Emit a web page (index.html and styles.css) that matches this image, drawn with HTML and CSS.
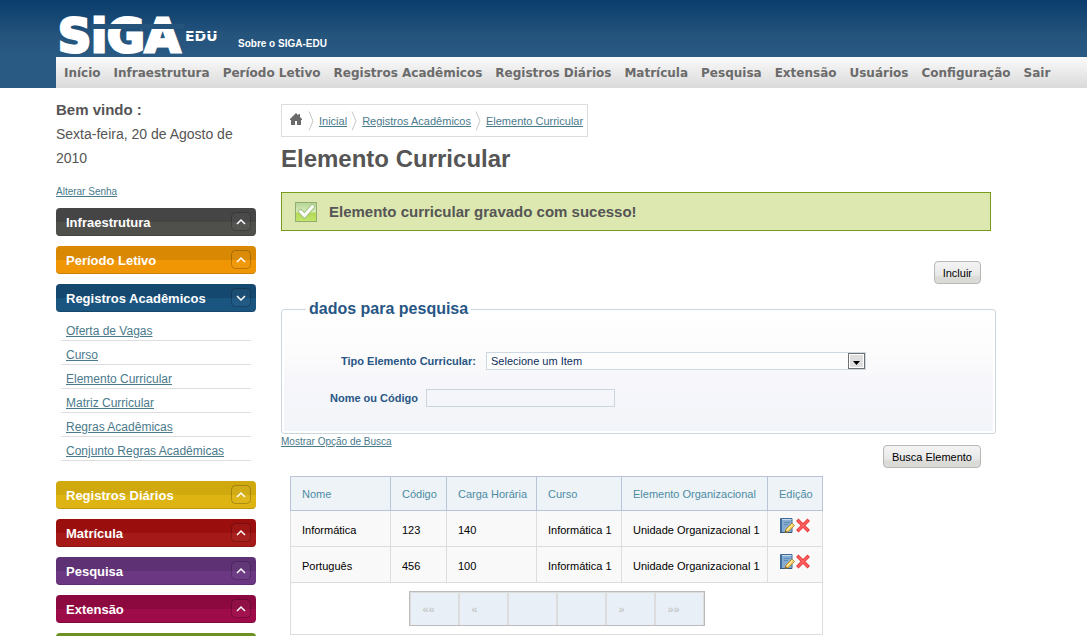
FILE: index.html
```html
<!DOCTYPE html>
<html lang="pt-BR">
<head>
<meta charset="utf-8">
<title>SIGA-EDU</title>
<link rel="stylesheet" href="styles.css">
</head>
<body>
<svg class="defs" aria-hidden="true">
  <symbol id="up" viewBox="0 0 22 20"><rect class="chip" x="1.500" y=".5" width="19" height="18" rx="4"/><path class="arrow" d="M7 12l4-4 4 4"/></symbol>
  <symbol id="down" viewBox="0 0 22 20"><rect class="chip" x="1.500" y=".5" width="19" height="18" rx="4"/><path class="arrow" d="M7 8l4 4 4-4"/></symbol>
  <symbol id="sep" viewBox="0 0 6 20"><path d="M1 0.500l4 9.500-4 9.500" fill="none" stroke="#c8c8c8"/></symbol>
  <symbol id="edit" viewBox="0 0 16 16">
    <path d="M1.500.500h11.500v14h-11.500z" fill="#86abd0" stroke="#3f6a99"/>
    <path d="M2.500 1v13" stroke="#416f9e"/><path d="M3 1.500h9.500" stroke="#c3d8ec"/>
    <path d="M5 4.500h6M5 6.500h4" stroke="#5f8cba"/>
    <path d="M1 14.500h12" stroke="#33597f"/>
    <path d="M6 14.500l1-3.500 6-6 2.500 2.500-6 6z" fill="#f8cd62" stroke="#a9802f" stroke-width=".8"/>
    <path d="M8 12l5.500-5.500" stroke="#fff0ac"/><path d="M6 14.500l.5-2 1.500 1.500z" fill="#5a4630"/>
  </symbol>
  <symbol id="del" viewBox="0 0 14 14"><path d="M2.500 2.500l9 9M11.500 2.500l-9 9" stroke="#e83c3c" stroke-width="3.500" stroke-linecap="square"/><path d="M2.500 2.500l9 9M11.500 2.500l-9 9" stroke="#ff6464" stroke-width="1.500" stroke-linecap="square"/></symbol>
</svg>

<header class="header">
  <div class="brand">
    <svg class="logo" width="164" height="42" role="img" aria-label="SIGA EDU">
      <text class="logo-main" x="2" y="38">SiGA</text>
      <path class="logo-cut" d="M36 10h92v5h-92z"/>
      <text class="logo-sub" x="129" y="27">EDU</text>
      <path class="logo-cut" d="M128 19h34v1h-34z"/>
    </svg>
    <a class="about" href="#">Sobre o SIGA-EDU</a>
  </div>
  <nav class="menu">
    <a href="#">Início</a><a href="#">Infraestrutura</a><a href="#">Período Letivo</a><a href="#">Registros Acadêmicos</a><a href="#">Registros Diários</a><a href="#">Matrícula</a><a href="#">Pesquisa</a><a href="#">Extensão</a><a href="#">Usuários</a><a href="#">Configuração</a><a href="#">Sair</a>
  </nav>
</header>

<div class="page">
  <aside class="sidebar">
    <p class="welcome"><strong>Bem vindo :</strong><br>Sexta-feira, 20 de Agosto de 2010</p>
    <a class="password" href="#">Alterar Senha</a>
    <div class="accordion">
      <button class="tab gray" type="button">Infraestrutura<svg><use href="#up"/></svg></button>
      <button class="tab orange" type="button">Período Letivo<svg><use href="#up"/></svg></button>
      <button class="tab blue" type="button">Registros Acadêmicos<svg><use href="#down"/></svg></button>
      <ul class="links">
        <li><a href="#">Oferta de Vagas</a></li>
        <li><a href="#">Curso</a></li>
        <li><a href="#">Elemento Curricular</a></li>
        <li><a href="#">Matriz Curricular</a></li>
        <li><a href="#">Regras Acadêmicas</a></li>
        <li><a href="#">Conjunto Regras Acadêmicas</a></li>
      </ul>
      <button class="tab yellow" type="button">Registros Diários<svg><use href="#up"/></svg></button>
      <button class="tab red" type="button">Matrícula<svg><use href="#up"/></svg></button>
      <button class="tab purple" type="button">Pesquisa<svg><use href="#up"/></svg></button>
      <button class="tab wine" type="button">Extensão<svg><use href="#up"/></svg></button>
      <button class="tab green" type="button" aria-label="Usuários"></button>
    </div>
  </aside>

  <main class="main">
    <nav class="crumbs">
      <svg class="home" viewBox="0 0 12 12"><path d="M6 0l2.500 2.500V1H10v3l2 2v1h-1v5H7V8H5v4H1V7H0V6z" fill="#6b6b6b"/></svg>
      <svg class="sep"><use href="#sep"/></svg><a href="#">Inicial</a>
      <svg class="sep"><use href="#sep"/></svg><a href="#">Registros Acadêmicos</a>
      <svg class="sep"><use href="#sep"/></svg><a href="#">Elemento Curricular</a>
    </nav>
    <h1>Elemento Curricular</h1>
    <div class="alert">
      <svg width="22" height="20" viewBox="0 0 22 20"><defs><linearGradient id="g" x2="0" y2="1"><stop offset="0" stop-color="#b4d596"/><stop offset=".5" stop-color="#d6ecba"/><stop offset=".55" stop-color="#b2d858"/><stop offset="1" stop-color="#c4e66a"/></linearGradient></defs><rect x=".5" y=".5" width="21" height="19" fill="url(#g)" stroke="#93ad70"/><path d="M5.500 9.500l4 4 8-9" fill="none" stroke="#a5c383" stroke-width="5" stroke-linecap="round"/><path d="M5.500 9.500l4 4 8-9" fill="none" stroke="#fff" stroke-width="3" stroke-linecap="round"/></svg>
      <span>Elemento curricular gravado com sucesso!</span>
    </div>
    <div class="actions"><button class="btn" type="button">Incluir</button></div>
    <form>
      <fieldset class="search">
        <legend>dados para pesquisa</legend>
        <div class="row type"><label for="tipo">Tipo Elemento Curricular:</label><span class="select"><select id="tipo"><option>Selecione um Item</option></select><svg viewBox="0 0 17 16"><rect x=".5" y=".5" width="16" height="15" fill="#fff" stroke="#707070"/><path d="M2 2h13v12h-13z" fill="#dedede"/><path d="M5 8h7l-3.500 4z"/></svg></span></div>
        <div class="row name"><label for="nome">Nome ou Código</label><input id="nome" type="text"></div>
      </fieldset>
      <div class="after"><a class="more" href="#">Mostrar Opção de Busca</a><button class="btn" type="button">Busca Elemento</button></div>
    </form>
    <table class="grid">
      <colgroup><col class="c1"><col class="c2"><col class="c3"><col class="c4"><col class="c5"><col class="c6"></colgroup>
      <thead><tr><th>Nome</th><th>Código</th><th>Carga Horária</th><th>Curso</th><th>Elemento Organizacional</th><th>Edição</th></tr></thead>
      <tbody>
        <tr><td>Informática</td><td>123</td><td>140</td><td>Informática 1</td><td>Unidade Organizacional 1</td><td><div class="tools"><button type="button" aria-label="Editar"><svg class="edit"><use href="#edit"/></svg></button><button type="button" aria-label="Excluir"><svg class="del"><use href="#del"/></svg></button></div></td></tr>
        <tr><td>Português</td><td>456</td><td>100</td><td>Informática 1</td><td>Unidade Organizacional 1</td><td><div class="tools"><button type="button" aria-label="Editar"><svg class="edit"><use href="#edit"/></svg></button><button type="button" aria-label="Excluir"><svg class="del"><use href="#del"/></svg></button></div></td></tr>
      </tbody>
      <tfoot><tr><td colspan="6"><div class="pager"><span>««</span><span>«</span><span></span><span></span><span>»</span><span>»»</span></div></td></tr></tfoot>
    </table>
  </main>
</div>
</body>
</html>
```
FILE: styles.css
```css
* { box-sizing: border-box; }
html { overflow: hidden; background: #fff; }
body { height: calc(100vh - 3px); overflow: hidden; margin: 0 2px 0 0; font: 11px/16px "Liberation Sans", Arial, sans-serif; color: #555; }
a { color: #4a7a8c; }
button, input, select { font-family: inherit; }
svg { display: block; flex: none; }
.defs { display: none; }

.header { padding-left: 56px; background: linear-gradient(#0a3d6d, #25547c 36px, #285a84 57px); }
.brand { display: flex; align-items: flex-end; gap: 18px; height: 57px; }
.logo { margin-bottom: 1px; overflow: visible; }
.logo-main { font: bold 46px "DejaVu Sans", sans-serif; fill: #fff; stroke: #fff; stroke-width: 3px; }
.logo-sub { font: bold 14px "DejaVu Sans", sans-serif; fill: #fff; }
.logo-cut { fill: #24537b; }
.about { padding-bottom: 5px; color: #fff; font-size: 10px; font-weight: bold; text-decoration: none; }
.menu { display: flex; gap: 13px; height: 31px; padding-left: 8px; align-items: center; background: linear-gradient(#fafafa, #dadada); white-space: nowrap; }
.menu a { color: #6b6b6b; font: bold 12px/16px "DejaVu Sans", Verdana, sans-serif; text-decoration: none; }

.page { display: flex; gap: 25px; padding: 10px 91px 0 56px; }
.sidebar { flex: none; width: 200px; }
.welcome { margin: 0; font-size: 14px; line-height: 24px; }
.welcome strong { font-size: 15px; }
.password { display: block; margin: 14px 0 8px; font-size: 10px; }
.accordion { display: flex; flex-direction: column; gap: 10px; }
.tab { display: flex; align-items: center; justify-content: space-between; height: 28px; padding: 0 4px 0 10px; border: 0; border-radius: 4px; color: #fff; font-size: 13px; font-weight: bold; background: linear-gradient(var(--a) 50%, var(--b) 50%); box-shadow: inset 0 -1px rgba(0, 0, 0, .15); }
.tab svg { width: 22px; height: 20px; }
.chip { fill: rgba(255, 255, 255, .03); stroke: rgba(0, 0, 0, .22); }
.arrow { fill: none; stroke: #fff; stroke-width: 1.5px; }
.gray { --a: #454545; --b: #4f4f4c; }
.orange { --a: #d98803; --b: #f09605; }
.blue { --a: #15486f; --b: #1a5580; }
.yellow { --a: #cfa90e; --b: #ddb412; }
.red { --a: #9b0e0e; --b: #a51a18; }
.purple { --a: #5d3174; --b: #6b3783; }
.wine { --a: #8b093e; --b: #9e0b49; }
.green { --a: #6e9020; --b: #7ba324; }
.links { margin: -5px 5px 10px; padding: 0; list-style: none; }
.links li { height: 24px; padding-left: 5px; border-bottom: 1px solid #ddd; font-size: 12px; line-height: 28px; }

.main { flex: 1; min-width: 0; padding-top: 6px; }
.crumbs { display: flex; align-items: center; width: fit-content; height: 33px; padding: 0 4px 0 8px; border: 1px solid #ddd; }
.home { width: 12px; height: 12px; margin: 0 6px 3px 0; }
.sep { width: 6px; height: 20px; margin-right: 5px; }
.crumbs a { margin-right: 4px; }
.crumbs a:last-child { margin-right: 0; }
h1 { margin: 8px 0 19px; font-size: 24px; line-height: 28px; }
.alert { display: flex; align-items: center; gap: 12px; height: 39px; margin-right: 5px; padding-left: 13px; border: 1px solid #7a9a1c; background: #dde8b0; font-size: 15px; font-weight: bold; }
.actions { display: flex; justify-content: flex-end; margin: 30px 15px 16px 0; }
.btn { height: 23px; padding: 0 8px; border: 1px solid #b8b8b8; border-radius: 4px; color: #000; font-size: 11px; background: linear-gradient(#f4f4f4, #e8e8e8 60%, #dadad6 75%, #dadad6); }
.search { margin: 0; padding: 34px 48px 26px; border: 1px solid #ccd6df; border-radius: 3px; background: linear-gradient(#fff, #fcfcfc 35%, #f6f6fb 60%, #f2f5f9); box-shadow: inset 0 0 0 2px #fff; }
.search legend { margin-left: -24px; padding: 0 3px; color: #285685; font-size: 16px; font-weight: bold; line-height: 18px; }
.row { display: flex; align-items: center; gap: 5px; color: #285685; font-weight: bold; }
.type { padding-left: 11px; }
.type label { min-width: 140px; }
.name { margin-top: 19px; }
.name label { min-width: 91px; }
.select { display: flex; flex: 0 1 380px; height: 18px; border: 1px solid #ccd9e2; background: #fdfdfd; }
.select select { flex: 1; min-width: 0; padding: 0 4px; border: 0; appearance: none; color: #0c2d5c; font-size: 11px; background: none; }
.select svg { width: 17px; height: 16px; }
.row input { width: 189px; height: 18px; border: 1px solid #ccd6df; background: transparent; }
.after { display: flex; justify-content: space-between; padding-right: 15px; }
.after .btn { margin-top: 11px; }
.more { font-size: 10px; }

.grid { width: 533px; margin: 8px 0 0 9px; border-collapse: collapse; table-layout: fixed; color: #000; }
.c1 { width: 100px; }
.c2 { width: 56px; }
.c3 { width: 90px; }
.c4 { width: 85px; }
.c5 { width: 146px; }
.c6 { width: 55px; }
.grid th, .grid td { height: 36px; padding: 2px 0 0 11px; border: 1px solid #ddd; text-align: left; font-weight: normal; white-space: nowrap; background: #f9f9f9; }
.grid th { height: 34px; padding-top: 0; border-color: #b9c4d8; color: #4d8ba5; background: #edf3f6; }
.grid tfoot td { height: 52px; padding: 0; background: #fff; }
.tools { display: flex; gap: 1px; padding-bottom: 8px; }
.tools button { padding: 0; border: 0; background: none; }
.edit { width: 16px; height: 16px; }
.del { width: 14px; height: 15px; }
.pager { display: grid; grid-template-columns: repeat(6, 1fr); gap: 2px; width: 296px; height: 35px; margin: 0 auto; border: 1px solid #bbb; padding: 1px; background: #ddd; color: #bbb; line-height: 32px; }
.pager span { padding-left: 12px; background: #e8eff7; }
```
